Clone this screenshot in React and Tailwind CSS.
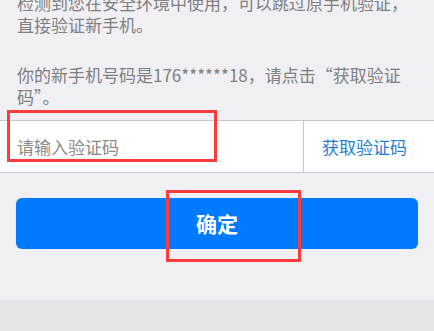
export default function App() {
  const font = { fontFamily: '"Noto Sans CJK SC", "Noto Sans", sans-serif' };
  return (
    <div
      className="w-[434px] h-[331px] overflow-hidden bg-[#efeff4] flex flex-col font-['Noto_Sans_CJK_SC',_'Noto_Sans',_sans-serif]"
      style={font}
    >
      <div className="mt-[-8px] px-[17px] text-[17px] leading-[22px] text-[#808080] whitespace-nowrap">
        <p>
          检测到您在安全环境中使用，可以跳过原手机验证，
          <br />
          直接验证新手机。
        </p>
        <p className="mt-[28px]">
          你的新手机号码是176******18，请点击“获取验证
          <br />
          码”。
        </p>
      </div>

      <div className="relative mt-[12px] h-[53px] flex border-y border-[#c8c7cc] bg-white">
        <div className="flex-1 flex items-center pl-[17px] text-[17px] text-[#8a8a8a]">
          请输入验证码
        </div>
        <div className="w-[131px] border-l border-[#c8c7cc] flex items-center pl-[18px] text-[17px] text-[#1f7fd8]">
          获取验证码
        </div>
        <div className="absolute left-[7px] top-[-11px] w-[210px] h-[52px] border-[3px] border-[#ff3b3b]" />
      </div>

      <div className="relative mx-[16px] mt-[25px] h-[51px] rounded-[6px] bg-[#007aff] flex items-center justify-center text-white text-[21px] font-bold">
        确定
        <div className="absolute left-[150px] top-[-8px] w-[135px] h-[72px] border-[3px] border-[#ff3b3b]" />
      </div>

      <div className="flex-1" />
      <div className="h-[31px] bg-[#e5e5e5]" />
    </div>
  );
}
